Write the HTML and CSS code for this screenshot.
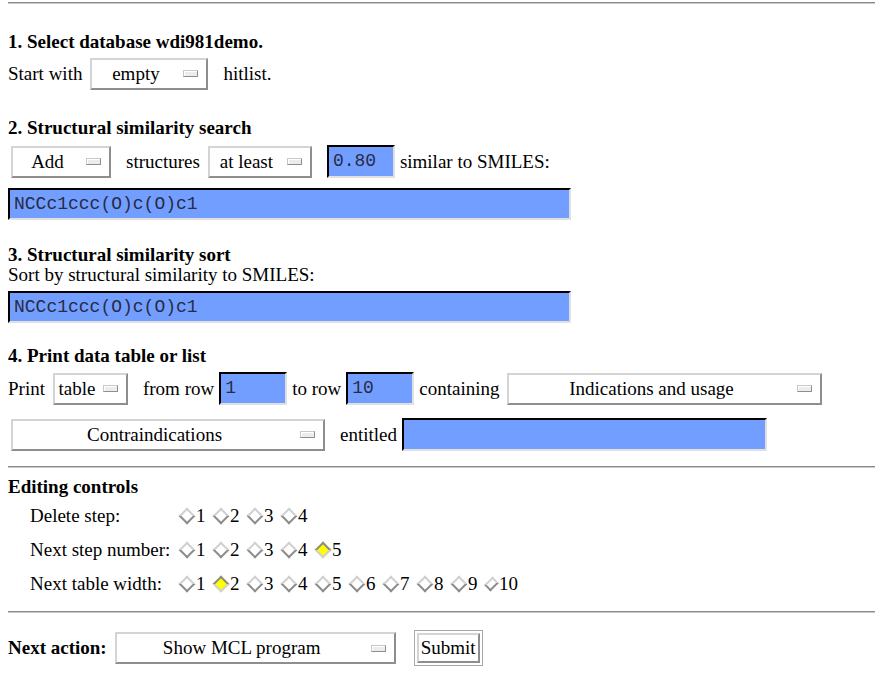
FILE: index.html
```html
<!DOCTYPE HTML>
<html lang="en">
  <head>
    <title>MCL query form</title>
    <meta charset="utf-8">
    <link rel="stylesheet" href="styles.css">
  </head>
  <body>

  <hr class="rule rule-top">

  <form class="query">

    <div class="step step-first">
      <div class="step-title">1. Select database wdi981demo.</div>
      <div class="row row-first">
        <span>Start with</span>
        <span class="select w-empty"><span class="label">empty</span><span class="knob"></span></span>
        <span>hitlist.</span>
      </div>
    </div>

    <div class="step">
      <div class="step-title">2. Structural similarity search</div>
      <div class="row">
        <span class="select w-add"><span class="label">Add</span><span class="knob"></span></span>
        <span>structures</span>
        <span class="select w-atleast"><span class="label">at least</span><span class="knob"></span></span>
        <span class="field w-small">0.80</span>
        <span>similar to SMILES:</span>
      </div>
      <div class="field w-smiles smiles-search">NCCc1ccc(O)c(O)c1</div>
    </div>

    <div class="step step-sort">
      <div class="step-title">3. Structural similarity sort</div>
      <div class="plain">Sort by structural similarity to SMILES:</div>
      <div class="field w-smiles smiles-sort">NCCc1ccc(O)c(O)c1</div>
    </div>

    <div class="step step-print">
      <div class="step-title">4. Print data table or list</div>
      <div class="row row-print">
        <span>Print</span>
        <span class="select w-table"><span class="label">table</span><span class="knob"></span></span>
        <span>from row</span>
        <span class="field w-small">1</span>
        <span>to row</span>
        <span class="field w-small">10</span>
        <span>containing</span>
        <span class="select w-wide"><span class="label">Indications and usage</span><span class="knob"></span></span>
      </div>
      <div class="row row-second">
        <span class="select w-wide2"><span class="label">Contraindications</span><span class="knob"></span></span>
        <span>entitled</span>
        <span class="field w-title"></span>
      </div>
    </div>

    <hr class="rule rule-mid">

    <div class="editing">
      <div class="editing-title">Editing controls</div>
      <div class="opts">
        <span class="opt-name">Delete step:</span>
        <span class="opts-list">
          <span class="opt"><span class="dia"></span>1</span>
          <span class="opt"><span class="dia"></span>2</span>
          <span class="opt"><span class="dia"></span>3</span>
          <span class="opt"><span class="dia"></span>4</span>
        </span>

        <span class="opt-name">Next step number:</span>
        <span class="opts-list">
          <span class="opt"><span class="dia"></span>1</span>
          <span class="opt"><span class="dia"></span>2</span>
          <span class="opt"><span class="dia"></span>3</span>
          <span class="opt"><span class="dia"></span>4</span>
          <span class="opt"><span class="dia on"></span>5</span>
        </span>

        <span class="opt-name">Next table width:</span>
        <span class="opts-list">
          <span class="opt"><span class="dia"></span>1</span>
          <span class="opt"><span class="dia on"></span>2</span>
          <span class="opt"><span class="dia"></span>3</span>
          <span class="opt"><span class="dia"></span>4</span>
          <span class="opt"><span class="dia"></span>5</span>
          <span class="opt"><span class="dia"></span>6</span>
          <span class="opt"><span class="dia"></span>7</span>
          <span class="opt"><span class="dia"></span>8</span>
          <span class="opt"><span class="dia"></span>9</span>
          <span class="opt"><span class="dia"></span>10</span>
        </span>
      </div>
    </div>

    <hr class="rule rule-bottom">

    <div class="row action">
      <strong>Next action:</strong>
      <span class="select w-action"><span class="label">Show MCL program</span><span class="knob"></span></span>
      <span class="submit"><span class="submit-face">Submit</span></span>
    </div>

  </form>

  </body>
</html>
```

FILE: styles.css
```css
html {
  background: #ffffff;
}
body {
  margin: 0 8px;
  padding: 0;
  color: #000000;
  font-family: "Liberation Serif", "Times New Roman", serif;
  font-size: 19px;
  line-height: 20px;
}

.rule {
  height: 0;
  margin: 0;
  border: 0;
  border-top: 1px solid #8c8c8c;
  border-bottom: 1px solid #c8c8c8;
}
.rule-top {
  margin-top: 2px;
}
.rule-mid {
  margin-top: 15px;
}
.rule-bottom {
  margin-top: 10px;
}

.step {
  margin-top: 28px;
}
.step-first {
  margin-top: 28px;
}
.step-sort {
  margin-top: 25px;
}
.step-print {
  margin-top: 23px;
}
.step-title, .editing-title {
  font-weight: bold;
  height: 20px;
}

.row {
  display: flex;
  align-items: center;
  gap: 5px;
  height: 33px;
  margin-top: 7px;
}
.row-first {
  margin-top: 5px;
}
.row-print {
  margin-top: 6px;
}
.row-second {
  margin-top: 13px;
}

.plain {
  height: 20px;
}

/* motif style option menu */
.select {
  display: flex;
  align-items: center;
  box-sizing: border-box;
  height: 32px;
  margin: 0 10px 0 3px;
  background: #ffffff;
  border: 2px solid;
  border-color: #d4d4d4 #8e8e8e #8e8e8e #d4d4d4;
}
.select .label {
  flex: 1;
  text-align: center;
  white-space: nowrap;
}
.select .knob {
  box-sizing: border-box;
  width: 15px;
  height: 7px;
  margin: 0 8px 0 4px;
  background: #ececec;
  border: 1px solid;
  border-color: #c8c8c8 #8e8e8e #8e8e8e #c8c8c8;
  box-shadow: inset 1px 1px 0 #ffffff;
}
.w-empty { width: 118px; }
.w-add { width: 100px; }
.w-atleast { width: 104px; }
.w-table { width: 75px; }
.w-wide { width: 315px; }
.w-wide2 { width: 314px; }
.w-action { width: 281px; }

/* text fields */
.field {
  display: block;
  box-sizing: border-box;
  height: 33px;
  padding: 0 4px;
  background: #729fff;
  border: 2px solid;
  border-color: #000000 #e0e0e0 #e0e0e0 #000000;
  color: #2a2a44;
  font-family: "Liberation Mono", "Courier New", monospace;
  font-size: 18px;
  line-height: 29px;
  white-space: nowrap;
}
.w-small { width: 68px; }
.w-title { width: 365px; }
.w-smiles { width: 563px; height: 32px; line-height: 28px; }
.smiles-search {
  margin-top: 10px;
}
.smiles-sort {
  margin-top: 6px;
}

.editing {
  margin-top: 9px;
}
.opts {
  display: grid;
  grid-template-columns: 148px auto;
  grid-auto-rows: 34px;
  align-items: center;
  padding-left: 22px;
  margin-top: 2px;
}
.opts-list {
  display: flex;
  align-items: center;
}
.opt {
  display: flex;
  align-items: center;
  width: 34px;
}
.dia {
  box-sizing: border-box;
  width: 12px;
  height: 12px;
  margin: 0 3px 0 3px;
  transform: rotate(45deg);
  border: 2px solid;
  border-color: #d0d0d0 #8c8c8c #8c8c8c #d0d0d0;
  background: #ffffff;
}
.dia.on {
  background: #ffff00;
  border-color: #8c8c8c #d0d0d0 #d0d0d0 #8c8c8c;
}

.action {
  height: 36px;
  margin-top: 17px;
}
.action .select {
  margin-left: 3px;
  margin-right: 13px;
}
.submit {
  box-sizing: border-box;
  height: 36px;
  padding: 2px;
  border: 1px solid #a8a8a8;
}
.submit-face {
  display: block;
  box-sizing: border-box;
  height: 30px;
  padding: 0 2px;
  line-height: 26px;
  border: 2px solid;
  border-color: #d4d4d4 #8e8e8e #8e8e8e #d4d4d4;
}
```
